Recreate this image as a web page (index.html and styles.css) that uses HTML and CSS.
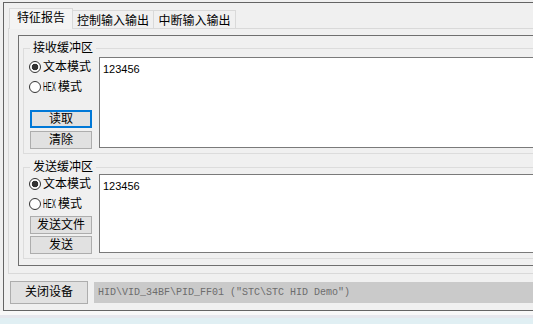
FILE: index.html
```html
<!DOCTYPE html>
<html lang="zh-CN">
<head>
    <meta charset="UTF-8">
    <title>STC HID</title>
    <link rel="stylesheet" href="styles.css">
</head>
<body>
    <div class="window">
        <div class="tabs">
            <div class="tab tab-first active">特征报告</div>
            <div class="tab tab-second">控制输入输出</div>
            <div class="tab tab-third">中断输入输出</div>
        </div>

        <div class="panel">
            <div class="frame">
                <!-- receive buffer -->
                <div class="group group-rx">
                    <div class="group-title">接收缓冲区</div>
                    <div class="group-body">
                        <div class="side">
                            <label class="radio"><input type="radio" name="rxMode" checked>文本模式</label>
                            <label class="radio"><input type="radio" name="rxMode"><span class="hex">HEX</span>模式</label>
                            <button class="btn btn-default btn-read">读取</button>
                            <button class="btn btn-next">清除</button>
                        </div>
                        <textarea class="buffer buffer-rx">123456</textarea>
                    </div>
                </div>

                <!-- send buffer -->
                <div class="group group-tx">
                    <div class="group-title">发送缓冲区</div>
                    <div class="group-body">
                        <div class="side">
                            <label class="radio"><input type="radio" name="txMode" checked>文本模式</label>
                            <label class="radio"><input type="radio" name="txMode"><span class="hex">HEX</span>模式</label>
                            <button class="btn btn-file">发送文件</button>
                            <button class="btn btn-next">发送</button>
                        </div>
                        <textarea class="buffer buffer-tx">123456</textarea>
                    </div>
                </div>
            </div>
        </div>

        <div class="bottom">
            <button class="btn btn-close">关闭设备</button>
            <div class="device-path">HID\VID_34BF\PID_FF01 ("STC\STC HID Demo")</div>
        </div>
    </div>

    <div class="desk-edge"></div>
    <div class="desk-line"></div>
    <div class="desk"></div>
</body>
</html>
```

FILE: styles.css
```css
/* Win32 style dialog */
* {
    box-sizing: border-box;
}

body {
    margin: 0;
    width: 533px;
    height: 324px;
    overflow: hidden;
    background: #f0f0f0;
    font-family: "Liberation Sans", "Noto Sans CJK SC", sans-serif;
    font-size: 12px;
    line-height: 14px;
    color: #000;
}

.window {
    margin: 2px 0 0 3px;
    width: 530px;
    height: 309px;
    border: 1px solid #646464;
    border-right: 0;
}

/* tabs */
.tabs {
    display: flex;
    align-items: flex-end;
    height: 25px;
    padding-left: 5px;
}

.tab {
    height: 18px;
    padding-top: 3px;
    border: 1px solid #d9d9d9;
    border-left: 0;
    border-bottom: 0;
    text-align: center;
    background: #f0f0f0;
}

.tab-first {
    width: 64px;
    border-left: 1px solid #d9d9d9;
}

.tab-second {
    width: 81px;
}

.tab-third {
    width: 82px;
}

.tab.active {
    position: relative;
    height: 21px;
    margin-bottom: -1px;
    padding-top: 2px;
    background: #f4f4f4;
}

.panel {
    margin-left: 4px;
    height: 246px;
    padding: 6px 0 0 9px;
    border: 1px solid #d9d9d9;
    border-right: 0;
}

.frame {
    padding: 12px 0 6px 4px;
    border: 1px solid #6f6f6f;
    border-right: 0;
}

/* group boxes */
.group {
    border: 1px solid #dcdcdc;
    border-right: 0;
}

.group-tx {
    margin-top: 13px;
}

.group-title {
    width: fit-content;
    margin: -8px 0 0 6px;
    padding: 0 3px;
    background: #f0f0f0;
}

.group-body {
    display: flex;
    align-items: flex-start;
    padding-left: 5px;
}

.group-rx .group-body {
    height: 98px;
    padding-top: 2px;
}

.group-tx .group-body {
    height: 84px;
}

.side {
    display: flex;
    flex-direction: column;
    width: 64px;
    flex-shrink: 0;
}

.radio {
    display: flex;
    align-items: center;
    gap: 2px;
    height: 20px;
    white-space: nowrap;
}

.radio input {
    appearance: none;
    -webkit-appearance: none;
    width: 12px;
    height: 12px;
    margin: 0;
    border: 1px solid #333;
    border-radius: 50%;
    background: #fff;
}

.radio input:checked {
    background: radial-gradient(circle, #333 0 3px, #fff 3.6px);
}

/* narrow bitmap-like HEX label */
.hex {
    display: inline-block;
    width: 13px;
    font-size: 13px;
    transform: scaleX(0.48);
    transform-origin: left center;
}

.btn {
    width: 62px;
    height: 18px;
    margin: 0 0 0 1px;
    padding: 0;
    border: 1px solid #adadad;
    background: #e1e1e1;
    font: inherit;
    line-height: 16px;
    color: #000;
}

.btn-default {
    border: 2px solid #0078d7;
    line-height: 14px;
}

.btn-read {
    margin-top: 13px;
}

.btn-file {
    margin-top: 2px;
}

.btn-next {
    margin-top: 2px;
}

.group-rx .btn-next {
    margin-top: 3px;
}

.buffer {
    flex: 1;
    min-width: 0;
    margin: 0 0 0 6px;
    padding: 4px 3px;
    border: 1px solid #7a7a7a;
    border-right: 0;
    background: #fff;
    font-family: "Liberation Sans", sans-serif;
    font-size: 11px;
    line-height: 14px;
    resize: none;
    overflow: hidden;
    outline: none;
}

.buffer-rx {
    height: 91px;
}

.buffer-tx {
    height: 79px;
}

/* bottom bar */
.bottom {
    display: flex;
    align-items: flex-start;
    gap: 6px;
    margin: 7px 0 0 6px;
}

.btn-close {
    width: 78px;
    height: 23px;
    margin: 0;
    line-height: 21px;
}

.device-path {
    flex: 1;
    min-width: 0;
    height: 21px;
    margin-top: 1px;
    padding-left: 4px;
    background: #cacaca;
    color: #6d6d6d;
    font-family: "Liberation Mono", monospace;
    font-size: 10px;
    line-height: 21px;
    white-space: nowrap;
    overflow: hidden;
}

/* strip under the window */
.desk-edge {
    height: 4px;
    background: #f8f8f8;
}

.desk-line {
    height: 3px;
    background: #e6e7ed;
}

.desk {
    height: 20px;
    background: #e0eff3;
}
```
